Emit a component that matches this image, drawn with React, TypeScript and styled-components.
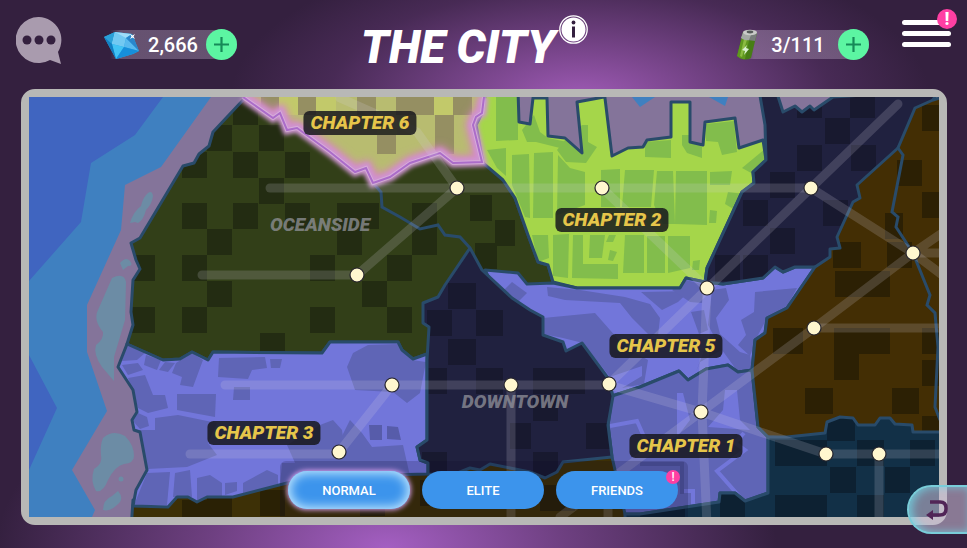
import React from "react";
import styled, { createGlobalStyle, css } from "styled-components";

const GlobalStyle = createGlobalStyle`
  *, *::before, *::after { box-sizing: border-box; }
  body { margin: 0; background: #34203f; font-family: Roboto, "Liberation Sans", sans-serif; }
  button { font: inherit; border: 0; padding: 0; cursor: pointer; }
`;

const Page = styled.main`
  position: relative;
  display: flex;
  flex-direction: column;
  min-height: 100vh;
  padding: 0 20px 23px 21px;
  overflow: hidden;
  background:
    radial-gradient(ellipse 350px 155px at 60% 100px, #a05bb7 0%, rgba(133, 76, 153, 0.8) 35%, rgba(85, 49, 100, 0.6) 72%, transparent 100%),
    radial-gradient(ellipse 390px 200px at 40% 100%, #a45fc2 0%, rgba(125, 72, 146, 0.8) 45%, transparent 100%),
    #34203f;
`;

const Header = styled.header`
  display: grid;
  grid-template-columns: 1fr auto 1fr;
  align-items: center;
  height: 89px;
  margin: 0 -4px 0 -5px;
`;

const Side = styled.div<{ $end?: boolean }>`
  display: flex;
  align-items: center;
  justify-content: ${(p) => (p.$end ? "flex-end" : "flex-start")};
  gap: ${(p) => (p.$end ? 33 : 40)}px;
`;

const IconButton = styled.button`
  position: relative;
  display: block;
  background: none;
  svg { display: block; }
`;

const ChatButton = styled(IconButton)`
  margin-bottom: 8px;
`;

const MenuButton = styled(IconButton)`
  display: flex;
  flex-direction: column;
  gap: 6px;
  width: 49px;
  margin-bottom: 22px;
`;

const Bar = styled.span`
  height: 5px;
  border-radius: 3px;
  background: #fff;
`;

const Badge = styled.span<{ $small?: boolean }>`
  position: absolute;
  top: ${(p) => (p.$small ? -1 : -11)}px;
  right: ${(p) => (p.$small ? -2 : -6)}px;
  width: ${(p) => (p.$small ? 14 : 20)}px;
  height: ${(p) => (p.$small ? 14 : 20)}px;
  border-radius: 50%;
  background: #ff3fa3;
  color: #fff;
  font-size: ${(p) => (p.$small ? 12 : 18)}px;
  font-weight: ${(p) => (p.$small ? 500 : 800)};
  line-height: ${(p) => (p.$small ? 14 : 20)}px;
  text-align: center;
`;

const Wallet = styled.div`
  display: flex;
  align-items: center;
  height: 29px;
  border-radius: 0 15px 15px 0;
  background: linear-gradient(90deg, transparent 7px, rgba(190, 170, 200, 0.36) 18px);
  color: #fff;
  font-size: 20px;
  font-weight: 500;
`;

const Amount = styled.span<{ $wide?: boolean }>`
  width: ${(p) => (p.$wide ? 80 : 66)}px;
  text-align: center;
`;

const PlusButton = styled.button`
  display: grid;
  place-items: center;
  width: 31px;
  height: 31px;
  border-radius: 50%;
  background: #5cf5a2;
`;

const TitleGroup = styled.div`
  display: flex;
  align-items: flex-start;
  gap: 4px;
  margin-right: 18px;
`;

const Title = styled.h1`
  margin: 5px 0 0;
  color: #fff;
  font-size: 46px;
  line-height: 54px;
  font-weight: 900;
  font-style: italic;
  white-space: nowrap;
`;

const Frame = styled.section`
  border: 8px solid #b8b8b6;
  border-radius: 14px;
  background: #b8b8b6;
`;

const MapArea = styled.div`
  position: relative;
  aspect-ratio: 910 / 420;
`;

const MapSvg = styled.svg`
  display: block;
  width: 100%;
  height: 100%;
`;

const labelText = css`
  position: absolute;
  transform: translate(-50%, -50%);
  font-size: 19px;
  line-height: 24px;
  font-weight: 900;
  font-style: italic;
  white-space: nowrap;
`;

const Chapter = styled.button`
  && { ${labelText} }
  padding: 0 7px;
  border-radius: 6px;
  background: rgba(22, 22, 28, 0.84);
  color: #e6c54a;
`;

const Area = styled.span`
  ${labelText}
  color: rgba(150, 150, 158, 0.72);
`;

const Tabs = styled.nav`
  position: absolute;
  left: 50%;
  bottom: 0;
  transform: translateX(-50%);
  display: flex;
  gap: 12px;
  padding: 10px 10px 8px 8px;
  border-radius: 6px 6px 0 0;
  background: rgba(10, 8, 40, 0.18);
`;

const Tab = styled.button<{ $active?: boolean }>`
  && {
    position: relative;
    width: 122px;
    height: 38px;
    border-radius: 19px;
    background: #3c94ec;
    color: #fff;
    font-size: 13px;
    font-weight: 500;
  }
  ${(p) => p.$active && css`
    box-shadow: 0 0 5px 1px #d9a2ef, inset 0 0 11px 2px #c8ecff;
  `}
`;

const BackButton = styled.button`
  && {
    position: absolute;
    right: 0;
    bottom: 14px;
    display: flex;
    align-items: center;
    width: 60px;
    height: 49px;
    padding-left: 17px;
    border: 2px solid #79cdd9;
    border-right: 0;
    border-radius: 25px 0 0 25px;
    background: rgba(205, 190, 215, 0.56);
    box-shadow: inset 3px 0 8px rgba(110, 220, 235, 0.75);
  }
`;

type Tile = [x: number, y: number, w?: number, h?: number];
type DistrictProps = {
  id: string;
  shape: string;
  fill: string;
  tileFill?: string;
  tiles?: Tile[];
  blocks?: string[];
  edge?: string;
  children?: React.ReactNode;
};

function District({ id, shape, fill, tileFill, tiles = [], blocks = [], edge = "#294b6a", children }: DistrictProps) {
  return (
    <g>
      <clipPath id={id}><polygon points={shape} /></clipPath>
      <polygon points={shape} fill={fill} />
      <g clipPath={`url(#${id})`} fill={tileFill}>
        {tiles.map(([x, y, w = 25, h = 26], i) => <rect key={i} x={x} y={y} width={w} height={h} />)}
        {blocks.map((b) => <polygon key={b} points={b} />)}
        {children}
      </g>
      <polygon points={shape} fill="none" stroke={edge} strokeWidth="3" strokeLinejoin="round" />
    </g>
  );
}

const oceanTiles: Tile[] = [
  [233, 99], [207, 125], [259, 125], [182, 152], [233, 152], [285, 152], [259, 178], [182, 203], [233, 203], [285, 203],
  [207, 229], [130, 255], [182, 255], [310, 255], [207, 281], [130, 307], [182, 307], [310, 307], [260, 333],
  [337, 203, 42], [412, 203], [337, 229], [412, 229], [387, 255], [362, 281], [387, 307], [475, 243, 22], [495, 220, 20], [470, 195, 22],
];
const downtownTiles: Tile[] = [
  [427, 310], [448, 339, 28], [476, 310, 27], [476, 368, 27], [422, 368], [533, 368, 52], [510, 423, 21], [533, 395],
  [586, 423], [533, 452], [448, 283, 28], [422, 452],
];
const northTiles: Tile[] = [
  [825, 118], [851, 145], [797, 145], [770, 172], [743, 200], [823, 200], [770, 228], [743, 255], [850, 92], [715, 255], [797, 92],
];
const eastTiles: Tile[] = [
  [922, 105], [897, 160], [922, 192], [885, 213, 18], [833, 242, 28], [835, 271, 55], [887, 242], [773, 328, 30], [834, 328, 56],
  [834, 354], [805, 388, 28], [892, 388, 27], [922, 360], [922, 328], [922, 416],
];
const harborTiles: Tile[] = [
  [827, 415, 28], [775, 440, 52], [857, 440, 27], [830, 467, 26], [885, 467], [775, 495, 52], [857, 495, 27], [720, 493], [910, 440], [640, 500, 45],
];
const southTiles: Tile[] = [[182, 500], [207, 494], [260, 490], [420, 480, 60], [540, 485, 35], [310, 480], [360, 490]];
const valleyTiles: Tile[] = [
  [261, 97, 18, 18], [298, 97, 18, 18], [357, 97, 19, 18], [396, 97, 38, 18], [453, 97, 19, 18], [435, 115, 19, 20], [377, 135, 19, 19], [435, 135, 19, 19],
];

const greenBlocks = [
  "496,97 518,97 518,140 496,141", "487,150 506,148 506,176 497,168", "512,155 529,154 530,218 525,217 512,185",
  "534,153 553,152 553,218 533,218", "558,155 570,168 585,172 585,205 557,215", "601,170 620,169 620,207 601,207",
  "625,170 654,170 651,207 622,207", "657,171 673,171 675,224 663,224 654,205", "676,171 707,171 707,225 675,224",
  "710,172 732,171 730,185 710,185", "710,210 717,211 716,223 709,223", "532,235 548,235 549,258 538,262",
  "553,235 569,234 568,278 553,276", "573,235 583,235 583,264 618,264 618,279 572,278", "590,235 605,235 602,258 589,258",
  "609,235 616,235 613,242 606,242", "610,250 617,252 613,261 608,260", "625,235 644,235 644,273 623,273",
  "647,236 665,236 665,273 647,273", "668,236 690,236 690,268 668,273", "693,261 700,260 699,270 692,270",
  "582,125 588,125 588,142 597,147 586,163 566,162 557,150 565,140", "645,142 671,140 671,158 645,157",
  "682,135 690,135 702,147 702,158 687,153 682,145", "706,124 734,121 737,152 722,155 718,142 706,141",
  "522,130 534,115 540,132 548,138 572,143 560,148 536,142 527,142", "742,168 766,148 766,160 753,174", "728,192 744,194 735,210 725,204",
];
const chapterThreeBlocks = [
  "127,345 145,353 137,360 122,361", "122,365 138,363 143,370 128,375", "146,355 161,360 157,370 144,365",
  "165,362 175,363 168,372 159,370", "176,363 192,353 203,360 193,387 180,385 182,377 172,373",
  "128,378 145,375 153,395 165,395 168,408 148,413 138,408", "177,394 216,394 215,417 177,410",
  "219,358 265,357 267,368 252,370 248,379 218,377", "270,359 282,359 280,368 271,368", "234,387 250,387 250,400 233,400",
  "155,418 178,415 217,423 208,443 217,455 187,467 147,469 139,430 155,430", "138,413 147,417 149,426 140,429 132,420",
  "147,473 170,472 167,505 134,505", "175,473 190,470 192,497 173,497", "197,478 210,475 222,483 222,497 197,502",
  "225,483 237,482 237,491 225,495", "243,483 267,470 278,475 278,486 243,493",
  "287,445 320,425 333,420 342,430 345,452 325,475 300,474", "353,353 368,345 398,344 412,360 426,362 420,393 407,403 393,392 355,390 347,367",
  "335,450 350,420 362,433 372,447 403,445 410,476 280,485 282,463 330,462",
];
const chapterFiveBlocks = [
  "512,282 527,293 517,303 502,292", "547,287 580,290 625,297 650,304 660,318 658,336 648,334 632,318 620,303 565,300 548,296",
  "641,292 690,291 678,302 662,310", "543,318 595,313 625,347 648,360 644,384 622,388 642,376 642,366 610,377 583,343 563,338 543,334",
  "691,312 704,310 708,330 699,334", "672,290 686,280 705,285 702,303 690,302",
  "712,290 726,288 729,300 716,318 720,334 740,352 750,355 752,370 738,372 722,350 700,362 696,372 706,345 716,340 708,325",
  "755,292 797,288 785,310 767,318 757,337 750,356 738,345 746,335 741,320 754,312",
];

const coast = "244,99 213,132 209,146 199,154 194,163 183,166 140,238 131,243 136,260 140,269 133,280 131,312 133,325 127,344";
const valleyEdge = "243,97 273,118 280,113 287,130 297,128 330,152 355,172 366,168 373,183 390,177 410,163 440,153 453,163 482,162 473,125 476,117 482,113 484,97";

const nodes = [
  [457, 188], [602, 188], [811, 188], [357, 275], [913, 253], [707, 288], [814, 328], [392, 385], [511, 385], [609, 384],
  [701, 412], [339, 452], [826, 454], [879, 454],
];
const roads = [
  "M270 188H811", "M202 275H357L457 188L417 132L340 98", "M602 188L707 288", "M898 104L811 188L609 384", "M811 188L913 253L945 277",
  "M945 231L913 253H945", "M913 253L814 328L701 412L560 517", "M814 328H945", "M225 385H609L701 412L826 454H945", "M879 454V525",
  "M707 288L702 412L707 525", "M511 385V525", "M392 385L339 452", "M190 454H339", "M608 490V525",
];

const CityMap = () => (
  <MapSvg viewBox="29 97 910 420" preserveAspectRatio="xMidYMid slice" role="img" aria-label="City districts">
    <defs>
      <filter id="glow" x="-10%" y="-30%" width="120%" height="160%"><feGaussianBlur stdDeviation="4" /></filter>
      <filter id="soft" x="-10%" y="-30%" width="120%" height="160%"><feGaussianBlur stdDeviation="2" /></filter>
    </defs>
    <rect x="29" y="97" width="910" height="420" fill="#3f80c0" />
    <polygon points="29,97 163,97 135,135 91,163 81,222 29,281" fill="#4065c0" />
    <polygon points="29,355 57,408 29,470" fill="#4065c0" />
    <polygon points="211,97 161,167 125,185 121,230 87,305 87,352 107,411 72,470 95,510 92,517 939,517 939,97" fill="#84749a" />
    <g fill="#6c8ca5">
      <path d="M148 193q4-3 5 3q-1 8-7 14q-3 11-8 13l-3-1-5 1q3-11 11-17q2-9 7-13z" />
      <path d="M120 263q6-7 10-2q4 5-2 5l-5 4z" />
      <path d="M112 278q12-6 14 4l-1 38-11 37v24l-12-14q-9-13-6-22q8-6 7-13q-10-12-5-22z" />
      <path d="M103 438q10-9 22-2q9 9 9 20q0 7-10 8q-9 2-16 16q-5 13-12 11q-6-10-2-22q9-5 7-14q-1-10 2-17z" />
      <path d="M118 491q7 8-1 14q-7 7-14 5q0-10 9-14z" /><circle cx="121" cy="479" r="2.5" />
    </g>
    <polygon points="632,97 640,107 655,97" fill="#3f80c0" />
    <polygon points="709,97 725,106 728,97" fill="#3f80c0" />

    <District id="south" fill="#3d3006" tileFill="#2a2105" tiles={southTiles} shape="131,530 133,500 420,455 620,450 640,530" />
    <District id="oceanside" fill="#323f18" tileFill="#232c12" tiles={oceanTiles}
      shape={`${coast} 163,360 180,359 192,352 208,360 213,352 322,353 330,342 398,342 402,350 413,359 427,354 470,300 560,290 553,282 548,265 538,262 528,235 515,198 503,180 480,150 440,140 373,160 290,97`} />
    <polyline points="373,183 381,192 382,207 400,217 420,229 438,225 445,235 460,237 470,248" fill="none" stroke="#294b6a" strokeWidth="3" />
    <District id="valley" fill="#b8bc70" tileFill="#958f62" tiles={valleyTiles} shape={valleyEdge} edge="none">
      <g fill="#c2c96a"><rect x="279" y="97" width="19" height="18" /><rect x="316" y="97" width="20" height="18" /><rect x="377" y="115" width="20" height="20" /><rect x="434" y="97" width="19" height="18" /></g>
      <polyline points={valleyEdge} fill="none" stroke="#d983c4" strokeWidth="13" filter="url(#glow)" />
    </District>
    <District id="chapter-2" fill="#a5d64a" tileFill="#82bd4c" blocks={greenBlocks}
      shape="486,90 482,113 476,125 483,163 503,180 515,198 528,235 538,262 548,265 553,282 577,288 680,288 686,278 705,282 707,268 742,192 754,183 753,172 766,160 763,140 739,148 735,118 705,122 703,145 690,142 690,102 671,102 671,137 647,140 643,147 628,148 612,156 604,90 604,97 577,102 582,153 565,138 548,136 547,98 533,98 530,124 519,122 518,90" />
    <District id="chapter-3" fill="#7276da" tileFill="#5f65b6" blocks={chapterThreeBlocks}
      shape="127,344 163,360 180,359 192,352 208,360 213,352 322,353 330,342 398,342 402,350 413,359 427,354 427,440 417,447 420,460 428,463 428,474 340,476 287,483 233,497 207,497 197,502 188,497 177,497 168,507 133,506 136,490 147,470 140,432 134,430 132,420 137,412 133,390 118,367">
      <path d="M369 425h13v15h-12zM387 426l11 1 3 13-14-1z" fill="#575caa" />
    </District>
    <District id="chapter-5" fill="#7276da" tileFill="#5f65b6" blocks={chapterFiveBlocks}
      shape="485,270 518,273 527,284 553,283 577,288 680,288 686,278 705,282 723,284 763,278 775,267 783,272 795,267 815,267 787,308 767,318 765,333 755,340 752,370 738,372 728,365 706,369 688,380 679,371 640,387 612,396 580,390 500,300" />
    <District id="chapter-1" fill="#5f65b6" tileFill="#7276da"
      blocks={["677,393 683,393 690,420 677,437", "725,390 737,390 740,420 750,430 708,427 723,410"]}
      shape="612,396 640,387 679,371 688,380 706,369 728,365 738,372 752,370 758,427 768,437 768,493 745,501 735,493 720,493 719,502 640,514 625,514 615,470 612,457 608,425">
      <path d="M610 426l27-5 8 18M744 433l-9 10 10 7-28 21 22 25M682 491h11v22" fill="none" stroke="#7276da" strokeWidth="4" />
      <path d="M640 464h42v30" fill="none" stroke="#5056a0" strokeWidth="4" />
    </District>
    <District id="downtown" fill="#20213f" tileFill="#18192f" tiles={downtownTiles}
      shape="470,248 482,270 512,298 530,310 543,317 543,335 563,342 566,351 582,343 608,378 613,396 608,425 612,457 563,462 557,472 545,478 530,472 490,464 480,470 470,468 450,476 428,474 428,463 420,460 417,447 427,440 427,360 429,327 423,323 423,303 438,297 445,285" />
    <District id="north" fill="#20213f" tileFill="#18192f" tiles={northTiles}
      shape="759,90 765,125 766,160 753,172 754,183 742,192 707,268 705,282 723,284 763,278 775,267 783,272 795,267 830,267 870,210 898,148 940,90 833,97 814,110 810,106 802,112 795,106 783,112 776,90" />
    <District id="east" fill="#432e04" tileFill="#2c2004" tiles={eastTiles}
      shape="950,95 933,100 915,108 898,148 857,185 860,198 853,202 837,237 840,248 830,249 830,257 815,267 787,308 767,318 765,333 755,340 752,370 758,427 768,437 825,440 950,440" />
    <polyline points="898,148 903,155 892,212 898,217 896,227 913,253 930,295 927,305 935,313 938,347 935,407 940,420" fill="none" stroke="#294b6a" strokeWidth="3" />
    <District id="harbor" fill="#123047" tileFill="#0d2132" tiles={harborTiles}
      shape="768,437 787,437 825,433 827,422 840,417 853,418 858,425 875,425 880,418 890,418 895,424 912,425 913,432 950,432 950,530 625,530 625,514 640,514 719,502 720,493 735,493 745,501 768,493" />

    <polyline points={valleyEdge} fill="none" stroke="#cf94d2" strokeWidth="9" filter="url(#soft)" />
    <polyline points={valleyEdge} fill="none" stroke="#dcbde0" strokeWidth="4" opacity="0.6" />
    <polyline points={valleyEdge} fill="none" stroke="#ab6cc9" strokeWidth="2" />
    <g fill="none" stroke="#d7d2e4" strokeOpacity="0.18" strokeWidth="9" strokeLinecap="round" strokeLinejoin="round">
      {roads.map((d) => <path key={d} d={d} />)}
    </g>
    <g fill="#fff7cf" stroke="#25232b" strokeWidth="1.2">
      {nodes.map(([x, y]) => <circle key={`${x}-${y}`} cx={x} cy={y} r="7" />)}
    </g>
  </MapSvg>
);

const mapX = (x: number) => `${((x - 29) / 910) * 100}%`;
const mapY = (y: number) => `${((y - 97) / 420) * 100}%`;
const chapters = [
  { name: "CHAPTER 6", x: 360, y: 123 }, { name: "CHAPTER 2", x: 612, y: 220 }, { name: "CHAPTER 5", x: 666, y: 346 },
  { name: "CHAPTER 3", x: 264, y: 433 }, { name: "CHAPTER 1", x: 686, y: 446 },
];
const areas = [{ name: "OCEANSIDE", x: 320, y: 225 }, { name: "DOWNTOWN", x: 515, y: 402 }];

const Gem = () => (
  <svg width="37" height="30" viewBox="0 0 37 30" aria-hidden="true">
    <path d="M1 7L12 2 29 4 36 21 30 24 13 29z" fill="#26a7e5" />
    <path d="M1 7L12 2 9 14z" fill="#2aa0d8" /><path d="M12 2L29 4 23 8 9 14z" fill="#9edcf8" />
    <path d="M12 2L23 8 21 17 9 14z" fill="#72c9f2" /><path d="M9 14L21 17 13 29z" fill="#42c3f4" />
    <path d="M1 7L9 14 13 29z" fill="#127fc2" /><path d="M23 8L36 21 21 17z" fill="#58b9ee" />
    <path d="M29 4L36 21 23 8z" fill="#2a86cb" /><path d="M21 17L36 21 30 24 13 29z" fill="#168fdb" />
    <path d="M27 4l2.500 1.500L32 4l-1.500 2.500L32 9l-2.500-1.500L27 9l1.500-2.500z" fill="#fff" />
  </svg>
);

const Battery = () => (
  <svg width="22" height="32" viewBox="0 0 22 32" aria-hidden="true">
    <path d="M7 3Q14-1 21 4L15 29Q8 33 1 27z" fill="#477d16" />
    <path d="M7 4L1 27Q5 31 9 30L14 7z" fill="#5f981f" /><path d="M9 6L4 27 6 28 12 7z" fill="#8bbb42" />
    <path d="M7 3Q14-1 21 4L19 12Q12 12 5 9z" fill="#777d7b" /><path d="M7 4L5 9Q9 12 13 11L15 6z" fill="#a3a8a4" />
    <ellipse cx="14" cy="3.5" rx="7" ry="2.7" fill="#c9cbc8" /><ellipse cx="14" cy="3" rx="3.3" ry="1.4" fill="#555b5a" />
    <path d="M11 16L6 21l3 1-1 4 5-6-3-1z" fill="#d9f0d0" />
  </svg>
);

const Plus = () => (
  <svg width="15" height="15" viewBox="0 0 15 15" aria-hidden="true"><path d="M7.500 0v15M0 7.500h15" stroke="#168a58" strokeWidth="2.200" /></svg>
);

export default function App() {
  return (
    <>
      <GlobalStyle />
      <Page>
        <Header>
          <Side>
            <ChatButton aria-label="Chat">
              <svg width="47" height="48" viewBox="0 0 47 48">
                <path d="M23 0a23 23 0 1 0 11 43L45 47 42 35A23 23 0 0 0 23 0z" fill="#a99bae" />
                <g fill="#34203f"><circle cx="11" cy="23" r="4.500" /><circle cx="23" cy="23" r="4.500" /><circle cx="35" cy="23" r="4.500" /></g>
              </svg>
            </ChatButton>
            <Wallet>
              <Gem />
              <Amount>2,666</Amount>
              <PlusButton aria-label="Add gems"><Plus /></PlusButton>
            </Wallet>
          </Side>
          <TitleGroup>
            <Title>THE CITY</Title>
            <IconButton aria-label="Information">
              <svg width="29" height="29" viewBox="0 0 29 29">
                <circle cx="14.500" cy="14.500" r="13.700" fill="none" stroke="#fff" strokeWidth="1.300" />
                <circle cx="14.500" cy="14.500" r="12" fill="#fff" />
                <circle cx="14.500" cy="7.500" r="1.900" fill="#34203f" /><path d="M14.500 11.500v11" stroke="#34203f" strokeWidth="3" />
              </svg>
            </IconButton>
          </TitleGroup>
          <Side $end>
            <Wallet>
              <Battery />
              <Amount $wide>3/111</Amount>
              <PlusButton aria-label="Add energy"><Plus /></PlusButton>
            </Wallet>
            <MenuButton aria-label="Menu">
              <Bar /><Bar /><Bar />
              <Badge>!</Badge>
            </MenuButton>
          </Side>
        </Header>
        <Frame>
          <MapArea>
            <CityMap />
            {areas.map((a) => <Area key={a.name} style={{ left: mapX(a.x), top: mapY(a.y) }}>{a.name}</Area>)}
            {chapters.map((c) => <Chapter key={c.name} style={{ left: mapX(c.x), top: mapY(c.y) }}>{c.name}</Chapter>)}
            <Tabs aria-label="Difficulty">
              <Tab $active aria-pressed="true">NORMAL</Tab>
              <Tab>ELITE</Tab>
              <Tab>FRIENDS<Badge $small>!</Badge></Tab>
            </Tabs>
          </MapArea>
        </Frame>
        <BackButton aria-label="Back">
          <svg width="22" height="22" viewBox="0 0 22 22"><path d="M4 3h10q6 0 6 6v1q0 6-6 6H5" fill="none" stroke="#512557" strokeWidth="3.500" /><path d="M0 16l7-5v10z" fill="#512557" /></svg>
        </BackButton>
      </Page>
    </>
  );
}
